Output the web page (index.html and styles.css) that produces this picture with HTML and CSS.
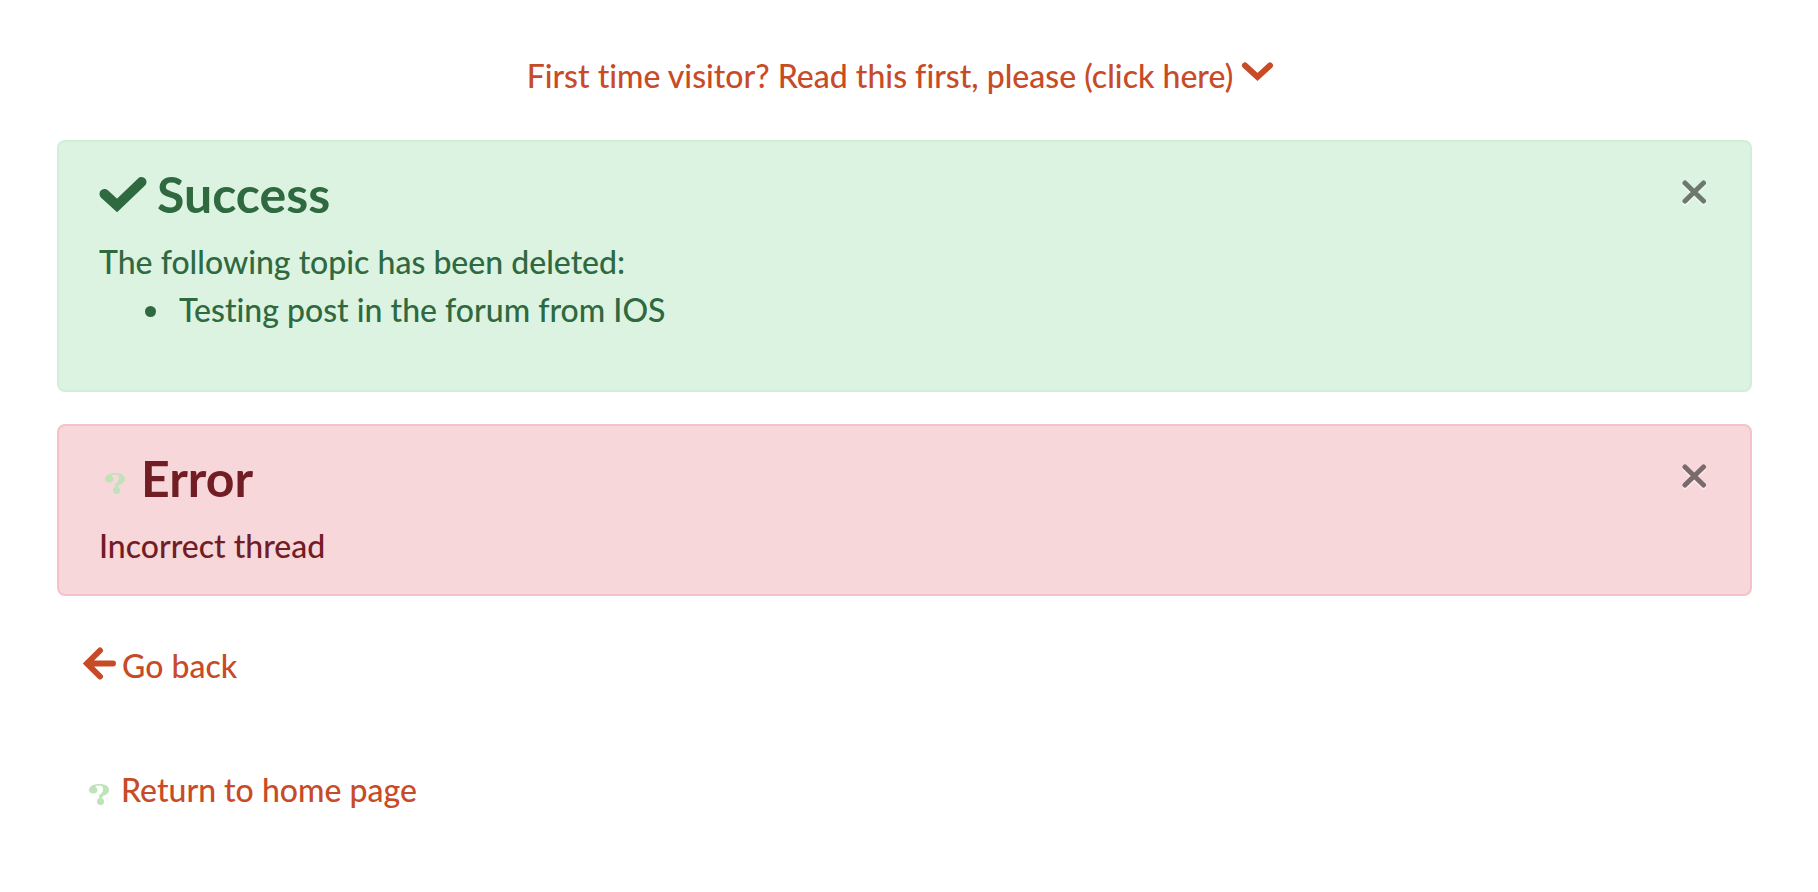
FILE: index.html
```html
<!DOCTYPE html>
<html lang="en">
<head>
    <meta charset="UTF-8">
    <meta name="viewport" content="width=device-width, initial-scale=1.0">
    <title>Forum</title>
    <link rel="stylesheet" href="styles.css">
</head>
<body>
    <!-- Shared broken-image icon -->
    <svg class="sprite" aria-hidden="true">
        <symbol id="icon-missing" viewBox="0 0 20 21">
            <path d="M0 6C0 2 5 0 10.500 0C16 0 20 2 20 6C20 9.500 16.500 11 14 12L13 14H10L10.500 10.500C13 9.500 14 8 14 5.500C14 3 13 1.500 10 1.500C8 1.500 6.500 2 6.500 3C8 4 8.500 5 8.500 6C8.500 8.500 6.500 9.500 4.500 9.500C2 9.500 0 8.500 0 6Z"/>
            <ellipse cx="11.500" cy="17.500" rx="3.500" ry="3.500"/>
        </symbol>
    </svg>

    <div class="container">
        <a href="#" class="intro">First time visitor? Read this first, please (click here) <svg class="icon-chevron" viewBox="0 0 33 20"><path d="M4 3.500L16.500 15L29 3.500"/></svg></a>

        <!-- Success message -->
        <div class="alert alert-success" role="alert">
            <div class="alert-body">
                <h2><svg class="icon-check" viewBox="0 0 48 36"><path d="M5.500 17L18 28.500L42.500 5"/></svg>Success</h2>
                <p>The following topic has been deleted:</p>
                <ul>
                    <li>Testing post in the forum from IOS</li>
                </ul>
            </div>
            <button type="button" class="close" aria-label="Close">
                <svg viewBox="0 0 24 24"><path d="M3 3L21.500 21M21.500 3L3 21"/></svg>
            </button>
        </div>

        <!-- Error message -->
        <div class="alert alert-danger" role="alert">
            <div class="alert-body">
                <h2><svg class="icon-missing"><use href="#icon-missing"/></svg>Error</h2>
                <p>Incorrect thread</p>
            </div>
            <button type="button" class="close" aria-label="Close">
                <svg viewBox="0 0 24 24"><path d="M3 3L21.500 21M21.500 3L3 21"/></svg>
            </button>
        </div>

        <div class="links">
            <a href="#"><svg class="icon-back" viewBox="0 0 34 34"><path d="M17 3.500L4 16.500L17 29.500M5 16.500H30"/></svg>Go back</a>
            <a href="#"><svg class="icon-missing"><use href="#icon-missing"/></svg>Return to home page</a>
        </div>
    </div>
</body>
</html>
```

FILE: styles.css
```css
* {
    box-sizing: border-box;
}
body {
    margin: 0;
    font-family: Lato, sans-serif;
    font-size: 32px;
    font-weight: 500;
    font-variant-ligatures: none;
    line-height: 48px;
    background-color: #fff;
}
.sprite {
    display: none;
}
.container {
    padding: 52px 66px 60px 57px;
}
a {
    color: #c84b27;
    text-decoration: none;
}
a:hover {
    text-decoration: underline;
}
svg path {
    stroke-linecap: round;
}
.intro {
    display: block;
    margin-bottom: 40px;
    padding-right: 8px;
    text-align: center;
}
.icon-chevron {
    width: 33px;
    height: 20px;
    vertical-align: 6px;
}
.icon-chevron path,
.icon-back path {
    fill: none;
    stroke: currentColor;
    stroke-width: 6;
}
.alert {
    display: flex;
    justify-content: space-between;
    align-items: flex-start;
    margin-bottom: 32px;
    padding: 24px 40px;
    border: 2px solid;
    border-radius: 8px;
}
.alert-success {
    color: #2e693f;
    background-color: #ddf3e1;
    border-color: #d1eed8;
}
.alert-danger {
    color: #721c24;
    background-color: #f7d7da;
    border-color: #f5c2c9;
}
.alert h2 {
    margin: 0 0 16px;
    font-size: 50px;
    font-weight: 700;
    line-height: 56px;
}
.alert p {
    margin: 0;
}
.alert ul {
    margin: 0 0 32px;
    padding-left: 74px;
}
.alert li {
    padding-left: 6px;
}
.icon-check {
    width: 48px;
    height: 36px;
    margin-right: 10px;
}
.icon-check path {
    fill: none;
    stroke: currentColor;
    stroke-width: 10;
}
.icon-missing {
    width: 20px;
    height: 21px;
    margin: 0 16px 0 6px;
    fill: #bfe3b8;
    vertical-align: 3px;
}
.close {
    margin: 14px 4px 0 0;
    padding: 0;
    border: none;
    background: none;
    line-height: 0;
    cursor: pointer;
    opacity: 0.5;
}
.close svg {
    width: 24px;
    height: 24px;
    filter: drop-shadow(0 2px 0 #fff);
}
.close path {
    fill: none;
    stroke: #000;
    stroke-width: 5;
}
.links {
    display: flex;
    flex-direction: column;
    align-items: flex-start;
    gap: 76px;
    padding: 14px 26px 0;
}
.links .icon-missing {
    margin: 0 12px 0 6px;
    vertical-align: -3px;
}
.icon-back {
    width: 34px;
    height: 34px;
    margin-right: 5px;
    vertical-align: -3px;
}
```
